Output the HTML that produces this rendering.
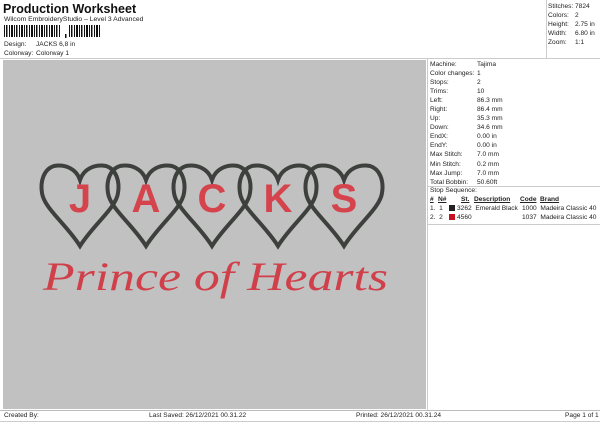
<!DOCTYPE html>
<html><head><meta charset="utf-8"><style>
*{margin:0;padding:0;box-sizing:border-box}
body{width:600px;height:424px;background:#fff;font-family:"Liberation Sans",sans-serif;color:#222;position:relative;overflow:hidden;font-size:6.6px}
.a{position:absolute;white-space:nowrap}
</style></head><body>
<div class="a" style="left:3px;top:2px;font-size:12.5px;font-weight:bold;color:#111">Production Worksheet</div>
<div class="a" style="left:4px;top:16px;font-size:6.8px">Wilcom EmbroideryStudio – Level 3 Advanced</div>
<svg class="a" style="left:4px;top:25px" width="100" height="14">
<g fill="#111">
<rect x="0" y="0" width="1" height="12"/><rect x="2" y="0" width="1.5" height="12"/><rect x="5" y="0" width="1" height="12"/><rect x="7" y="0" width="2" height="12"/><rect x="10" y="0" width="1" height="12"/><rect x="12" y="0" width="1.5" height="12"/><rect x="15" y="0" width="1" height="12"/><rect x="17" y="0" width="2" height="12"/><rect x="20" y="0" width="1" height="12"/><rect x="22" y="0" width="1.5" height="12"/><rect x="25" y="0" width="1" height="12"/><rect x="27" y="0" width="2" height="12"/><rect x="30" y="0" width="1" height="12"/><rect x="32" y="0" width="1.5" height="12"/><rect x="35" y="0" width="1" height="12"/><rect x="37" y="0" width="2" height="12"/><rect x="40" y="0" width="1" height="12"/><rect x="42" y="0" width="1.5" height="12"/><rect x="45" y="0" width="1" height="12"/><rect x="47" y="0" width="2" height="12"/><rect x="50" y="0" width="1" height="12"/><rect x="52" y="0" width="1.5" height="12"/><rect x="55" y="0" width="1" height="12"/>
<rect x="61" y="9" width="1.5" height="4"/>
<rect x="65" y="0" width="1" height="12"/><rect x="67" y="0" width="1.5" height="12"/><rect x="70" y="0" width="1" height="12"/><rect x="72" y="0" width="2" height="12"/><rect x="75" y="0" width="1" height="12"/><rect x="77" y="0" width="1.5" height="12"/><rect x="80" y="0" width="1" height="12"/><rect x="82" y="0" width="2" height="12"/><rect x="85" y="0" width="1" height="12"/><rect x="87" y="0" width="1.5" height="12"/><rect x="90" y="0" width="1" height="12"/><rect x="92" y="0" width="2" height="12"/><rect x="95" y="0" width="1" height="12"/>
</g></svg>
<div class="a" style="left:4px;top:41px">Design:</div><div class="a" style="left:36px;top:41px">JACKS 6,8 in</div>
<div class="a" style="left:4px;top:50px">Colorway:</div><div class="a" style="left:36px;top:50px">Colorway 1</div>
<div class="a" style="left:0;top:58px;width:600px;border-top:1px solid #ccc"></div>
<div class="a" style="left:546px;top:0;height:58px;border-left:1px solid #ccc"></div>
<div class="a" style="left:548px;top:2px;line-height:9px">Stitches:<br>Colors:<br>Height:<br>Width:<br>Zoom:</div>
<div class="a" style="left:575px;top:2px;line-height:9px">7824<br>2<br>2.75 in<br>6.80 in<br>1:1</div>
<div class="a" style="left:3px;top:60px;width:423px;height:349px;background:#c1c1c1"></div>
<div class="a" style="left:427px;top:59px;height:351px;border-left:1px solid #ccc"></div>
<svg class="a" style="left:3px;top:60px" width="423" height="349">
<g fill="none" stroke="#3d403d" stroke-width="4">
<path id="h" d="M0,14 C-4,2 -16,-2 -26,0 C-36,3 -40,15 -38,27 C-36,42 -14,58 0,80 C14,58 36,42 38,27 C40,15 36,3 26,0 C16,-2 4,2 0,14Z" transform="translate(77,106)"/>
<use href="#h" x="66"/><use href="#h" x="132"/><use href="#h" x="198"/><use href="#h" x="264"/>
</g>
<g fill="#d5444c" font-family="Liberation Sans" font-weight="bold" font-size="40" text-anchor="middle">
<text x="77" y="152">J</text><text x="143" y="152">A</text><text x="209" y="152">C</text><text x="275" y="152">K</text><text x="341" y="152">S</text>
</g>
<text x="40" y="230" fill="#d0404a" font-family="Liberation Serif" font-style="italic" font-size="40" textLength="345" lengthAdjust="spacingAndGlyphs">Prince of Hearts</text>
</svg>
<div class="a" style="left:430px;top:60px;line-height:9.05px">Machine:<br>Color changes:<br>Stops:<br>Trims:<br>Left:<br>Right:<br>Up:<br>Down:<br>EndX:<br>EndY:<br>Max Stitch:<br>Min Stitch:<br>Max Jump:<br>Total Bobbin:</div>
<div class="a" style="left:477px;top:60px;line-height:9.05px">Tajima<br>1<br>2<br>10<br>86.3 mm<br>86.4 mm<br>35.3 mm<br>34.6 mm<br>0.00 in<br>0.00 in<br>7.0 mm<br>0.2 mm<br>7.0 mm<br>50.60ft</div>
<div class="a" style="left:428px;top:186px;width:172px;border-top:1px solid #ccc"></div>
<div class="a" style="left:430px;top:187px">Stop Sequence:</div>
<div class="a" style="left:430px;top:196px;font-weight:bold;text-decoration:underline">#</div>
<div class="a" style="left:438px;top:196px;font-weight:bold;text-decoration:underline">N#</div>
<div class="a" style="left:461px;top:196px;font-weight:bold;text-decoration:underline">St.</div>
<div class="a" style="left:474px;top:196px;font-weight:bold;text-decoration:underline">Description</div>
<div class="a" style="left:520px;top:196px;font-weight:bold;text-decoration:underline">Code</div>
<div class="a" style="left:540px;top:196px;font-weight:bold;text-decoration:underline">Brand</div>
<div class="a" style="left:430px;top:205px">1.&nbsp; 1</div>
<div class="a" style="left:449px;top:205px;width:6px;height:6px;background:#222"></div>
<div class="a" style="left:457px;top:205px">3262&nbsp; Emerald Black</div>
<div class="a" style="left:522px;top:205px">1000&nbsp; Madeira Classic 40</div>
<div class="a" style="left:430px;top:214px">2.&nbsp; 2</div>
<div class="a" style="left:449px;top:214px;width:6px;height:6px;background:#c8101e"></div>
<div class="a" style="left:457px;top:214px">4560</div>
<div class="a" style="left:522px;top:214px">1037&nbsp; Madeira Classic 40</div>
<div class="a" style="left:428px;top:224px;width:172px;border-top:1px solid #ccc"></div>
<div class="a" style="left:0;top:410px;width:600px;border-top:1px solid #bbb"></div>
<div class="a" style="left:0;top:421px;width:600px;border-top:1px solid #ccc"></div>
<div class="a" style="left:4px;top:412px">Created By:</div>
<div class="a" style="left:149px;top:412px">Last Saved: 26/12/2021 00.31.22</div>
<div class="a" style="left:356px;top:412px">Printed: 26/12/2021 00.31.24</div>
<div class="a" style="left:565px;top:412px">Page 1 of 1</div>
</body></html>
